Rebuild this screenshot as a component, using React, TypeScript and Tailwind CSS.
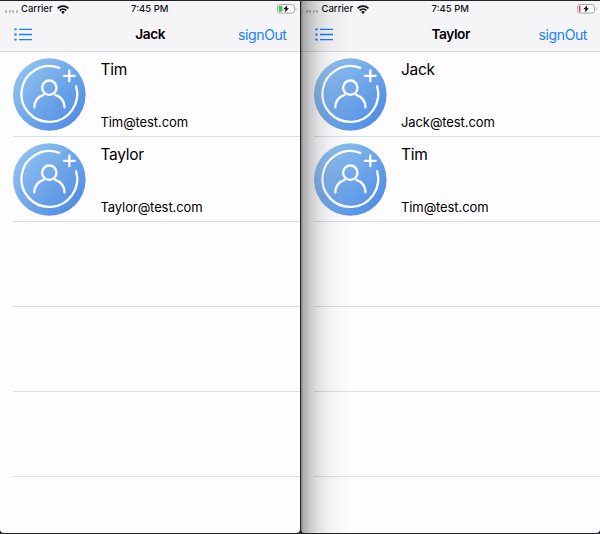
interface Contact {
  name: string;
  email: string;
}

interface PhoneProps {
  title: string;
  contacts: Contact[];
  battery: "green" | "red";
  shaded?: boolean;
}

function Avatar({ id }: { id: string }) {
  return (
    <svg className="block size-[73px] shrink-0" viewBox="0 0 73 73" fill="none">
      <defs>
        <linearGradient id={id} x1="8" y1="10" x2="66" y2="62" gradientUnits="userSpaceOnUse">
          <stop stopColor="#8fc1f0" />
          <stop offset="1" stopColor="#518de4" />
        </linearGradient>
      </defs>
      <circle cx="36.3" cy="36.5" r="36.3" fill={`url(#${id})`} />
      <g stroke="#fff" strokeWidth="2.3" strokeLinecap="round">
        <path d="M46.2 9.9A27.9 27.9 0 1 0 63.1 28.3" />
        <path d="M56.3 12.4v10.8M50.9 17.8h10.8" />
        <circle cx="36.3" cy="29.7" r="7.2" />
        <path d="M21.3 49.4c.2-6 3.8-10.8 9.2-12.6M51.5 49.4c-.2-6-3.8-10.8-9.2-12.6" />
      </g>
    </svg>
  );
}

function Wifi() {
  return (
    <svg className="ml-[4px] block h-[9px] w-[12px]" viewBox="0 0 12 9" fill="none" stroke="#111" strokeWidth="1.8">
      <path d="M.6 3.3a7.7 7.7 0 0 1 10.8 0" />
      <path d="M2.7 5.5a4.7 4.7 0 0 1 6.6 0" />
      <path d="M6 8.9 4.1 7a2.7 2.7 0 0 1 3.8 0Z" fill="#111" stroke="none" />
    </svg>
  );
}

function Battery({ color }: { color: "green" | "red" }) {
  return (
    <svg className="block h-[10px] w-[20px]" viewBox="0 0 20 10" fill="none">
      <rect x=".5" y=".5" width="17" height="8.6" rx="2.4" fill="#fbfbfb" stroke="#a9a9ac" />
      <path d="M18.6 3.4c1 .5 1 2.4 0 2.9z" fill="#a9a9ac" />
      {color === "green" ? (
        <rect x="1.7" y="1.8" width="3.8" height="6" rx="1" fill="#34c759" />
      ) : (
        <rect x="1.9" y="1.8" width="1.7" height="6" rx=".6" fill="#ff3b30" />
      )}
      <path d="M10.3 1.2 6.2 5.3h2.4L7.8 8.5l4.1-4.2H9.6z" fill="#000" />
    </svg>
  );
}

function ListIcon() {
  return (
    <svg className="block h-[13px] w-[18px]" viewBox="0 0 18 13" stroke="#147efb" strokeWidth="1.3">
      <path d="M5 1.3h13M5 6.5h13M5 11.7h13" />
      <path d="M.3 1.3h2.4M.3 6.5h2.4M.3 11.7h2.4" strokeWidth="1.8" />
    </svg>
  );
}

function Phone({ title, contacts, battery, shaded }: PhoneProps) {
  return (
    <section className="relative flex h-[532px] min-w-0 flex-1 flex-col overflow-hidden rounded-b-[4px] bg-[#fdfcfe]">
      <header className="h-[51px] shrink-0 border-b border-[#d8d8db] bg-[#f5f4f6]">
        <div className="grid h-[16px] grid-cols-3 items-center text-[9.5px] font-medium text-[#161618]">
          <div className="flex items-center pl-[5px]">
            <span className="mt-[5px] flex gap-[1.4px]">
              {[0, 1, 2, 3].map((dot) => (
                <i key={dot} className="size-[2.2px] rounded-full bg-[#b5b5b8]" />
              ))}
            </span>
            <span className="ml-[3px] tracking-[0.02px]">Carrier</span>
            <Wifi />
          </div>
          <span className="text-center">7:45 PM</span>
          <div className="flex justify-end pr-[3px]">
            <Battery color={battery} />
          </div>
        </div>
        <nav className="grid h-[35px] grid-cols-3 items-center pr-[13px] pl-[14px]">
          <ListIcon />
          <h1 className="text-center text-[13.7px] font-semibold tracking-[-0.4px] text-black">{title}</h1>
          <button className="text-right text-[14px] tracking-[-0.4px] text-[#147efb]">signOut</button>
        </nav>
      </header>
      <main>
        {[0, 1, 2, 3, 4].map((row) => {
          const contact = contacts[row];
          return (
            <div key={row} className="ml-[13px] flex h-[85px] border-b border-[#dddde0] pt-[6px]">
              {contact && (
                <>
                  <Avatar id={`${title}-${row}`} />
                  <div className="ml-[14.5px] flex h-[73px] flex-col justify-between pt-px text-black">
                    <span className="text-[15.5px] leading-[22px] tracking-[-0.3px]">{contact.name}</span>
                    <span className="text-[13px] leading-[18px] tracking-[-0.1px]">{contact.email}</span>
                  </div>
                </>
              )}
            </div>
          );
        })}
      </main>
      {shaded && (
        <div className="pointer-events-none absolute inset-y-0 left-0 w-[50px] bg-[linear-gradient(to_right,rgba(0,0,0,.5)_0,rgba(0,0,0,.32)_2px,rgba(0,0,0,.22)_8px,rgba(0,0,0,.11)_17px,rgba(0,0,0,.04)_30px,transparent_50px)]" />
      )}
    </section>
  );
}

export default function App() {
  return (
    <div className="flex h-[534px] w-[600px] gap-px overflow-hidden bg-[#25232a] pt-px font-['Inter','Liberation_Sans',sans-serif]">
      <Phone
        title="Jack"
        battery="green"
        contacts={[
          { name: "Tim", email: "Tim@test.com" },
          { name: "Taylor", email: "Taylor@test.com" },
        ]}
      />
      <Phone
        title="Taylor"
        battery="red"
        shaded
        contacts={[
          { name: "Jack", email: "Jack@test.com" },
          { name: "Tim", email: "Tim@test.com" },
        ]}
      />
    </div>
  );
}
